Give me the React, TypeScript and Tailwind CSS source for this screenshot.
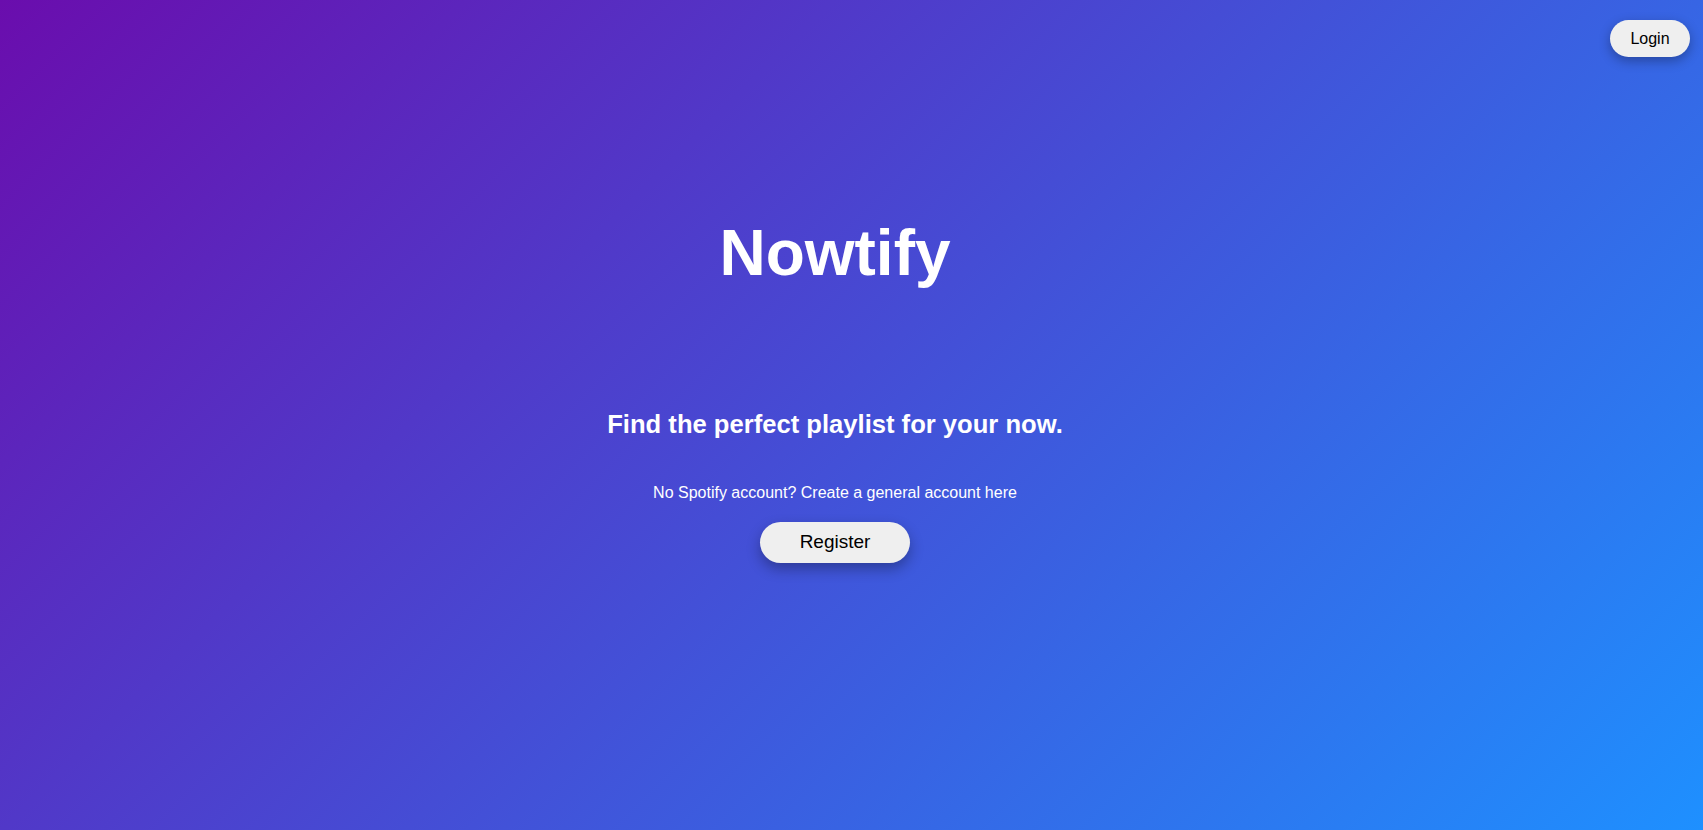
export default function App() {
  return (
    <div className="relative min-h-[830px] w-full bg-[linear-gradient(135deg,#6a0dad,#1e90ff)] font-['Liberation_Sans',Arial,sans-serif] text-white">
      <button
        type="button"
        className="absolute right-[13px] top-[20px] h-[37px] w-[80px] rounded-full bg-[#efefef] text-[16px] text-black shadow-[0_4px_12px_rgba(0,0,0,0.3)]"
      >
        Login
      </button>

      <main className="flex flex-col items-center pr-[33px] pt-[221px]">
        <h1 className="text-[64px] font-bold leading-none">Nowtify</h1>
        <h2 className="mt-[127px] text-[25.6px] font-bold leading-none">
          Find the perfect playlist for your now.
        </h2>
        <p className="mt-[47px] text-[16px] leading-none">
          No Spotify account? Create a general account here
        </p>
        <button
          type="button"
          className="mt-[21px] h-[41px] w-[150px] rounded-full bg-[#efefef] text-[19px] text-black shadow-[0_6px_14px_rgba(0,0,0,0.3)]"
        >
          Register
        </button>
      </main>
    </div>
  );
}
